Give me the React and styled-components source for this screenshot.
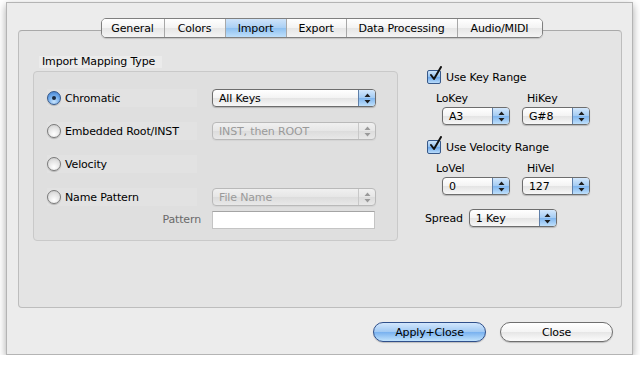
import React from 'react';
import styled, { createGlobalStyle, css } from 'styled-components';

const Global = createGlobalStyle`
  html, body {
    margin: 0;
    padding: 0;
    background: #fff;
  }
  body {
    font-family: "DejaVu Sans", "Liberation Sans", sans-serif;
    font-size: 11px;
    letter-spacing: -0.15px;
    color: #000;
  }
`;

const Window = styled.div`
  margin: 2px 0 0 6px;
  width: 627px;
  height: 353px;
  box-sizing: border-box;
  background: #ececec;
  border: 1px solid #b4b4b4;
  box-shadow: 0 3px 8px rgba(0, 0, 0, 0.35);
  padding-top: 15px;
  display: flex;
  flex-direction: column;
`;

const Tabs = styled.div`
  align-self: center;
  display: flex;
  height: 20px;
  box-sizing: border-box;
  border: 1px solid #7f7f7f;
  border-radius: 5px;
  overflow: hidden;
  position: relative;
  z-index: 1;
  margin-left: 4px;
  box-shadow: 0 1px 1px rgba(0, 0, 0, 0.15);
`;

const Tab = styled.div`
  width: ${p => p.w}px;
  display: flex;
  align-items: center;
  justify-content: center;
  background: linear-gradient(#ffffff, #f3f3f3 50%, #e6e6e6 51%, #f4f4f4);
  & + & {
    border-left: 1px solid #a8a8a8;
  }
  ${p => p.active && css`
    background: linear-gradient(#cfe4fa, #a9cff4 50%, #8ec0f0 51%, #bfe0fb);
  `}
`;

const Panel = styled.div`
  margin: -8px 10px 0 11px;
  height: 278px;
  box-sizing: border-box;
  background: #e4e4e4;
  border: 1px solid #bdbdbd;
  border-top-color: #a9a9a9;
  border-radius: 4px;
  padding: 25px 0 0 14px;
  display: flex;
`;

const Group = styled.div`
  width: 365px;
  display: flex;
  flex-direction: column;
`;

const Legend = styled.div`
  margin-left: 6px;
  width: 123px;
  height: 12px;
  line-height: 12px;
  padding-left: 3px;
  box-sizing: border-box;
  background: #ebebeb;
`;

const GroupBox = styled.div`
  margin-top: 3px;
  height: 170px;
  box-sizing: border-box;
  background: #dfdfdf;
  border: 1px solid #c9c9c9;
  border-radius: 4px;
  padding: 17px 0 0 13px;
  display: grid;
  grid-template-columns: 165px 164px;
  grid-auto-rows: 18px;
  row-gap: 15px;
  align-content: start;
`;

const Cell = styled.div`
  display: flex;
  align-items: center;
  ${p => p.tight && css`
    align-self: start;
    margin-top: -10px;
  `}
`;

const RadioLabel = styled.label`
  display: flex;
  align-items: center;
  gap: 4px;
  height: 18px;
  width: ${p => p.w}px;
  background: #e2e2e2;
`;

const RadioDot = styled.span`
  width: 14px;
  height: 14px;
  box-sizing: border-box;
  border-radius: 50%;
  border: 1px solid #7a7a7a;
  background: radial-gradient(circle at 50% 75%, #ffffff, #e2e2e2 60%, #c6c6c6);
  box-shadow: 0 1px 1px rgba(0, 0, 0, 0.2);
  display: flex;
  align-items: center;
  justify-content: center;
  ${p => p.on && css`
    border-color: #35588a;
    background: radial-gradient(circle at 50% 80%, #c8e4fd, #6fa9ea 55%, #3a77c8);
    &::after {
      content: '';
      width: 4px;
      height: 4px;
      border-radius: 50%;
      background: #1a2a40;
    }
  `}
`;

const PatternLabel = styled.div`
  justify-self: end;
  align-self: start;
  margin-top: -10px;
  line-height: 18px;
  padding-right: 11px;
  color: #6a6a6a;
`;

const TextField = styled.div`
  height: 18px;
  width: 163px;
  box-sizing: border-box;
  background: #fff;
  border: 1px solid #c4c4c4;
  border-top-color: #a4a4a4;
`;

const PopupBox = styled.div`
  width: ${p => p.w}px;
  height: 18px;
  box-sizing: border-box;
  border: 1px solid ${p => (p.disabled ? '#b9b9b9' : '#6d6d6d')};
  border-radius: 4px;
  display: flex;
  overflow: hidden;
  background: ${p => (p.disabled
    ? 'linear-gradient(#f0f0f0, #e6e6e6 50%, #dcdcdc 51%, #e8e8e8)'
    : 'linear-gradient(#ffffff, #f3f3f3 50%, #e4e4e4 51%, #f7f7f7)')};
  color: ${p => (p.disabled ? '#9a9a9a' : '#000')};
  box-shadow: 0 1px 1px rgba(0, 0, 0, ${p => (p.disabled ? 0.05 : 0.2)});
`;

const PopupText = styled.div`
  flex: 1;
  padding-left: 6px;
  display: flex;
  align-items: center;
  white-space: nowrap;
`;

const PopupArrows = styled.div`
  width: 16px;
  display: flex;
  align-items: center;
  justify-content: center;
  border-left: 1px solid ${p => (p.disabled ? '#c8c8c8' : '#5f7fa8')};
  background: ${p => (p.disabled
    ? 'transparent'
    : 'linear-gradient(#d3e7fc, #a3cbf3 50%, #7fb5ee 51%, #bfe0fb)')};
`;

const Popup = ({ w, disabled, children }) => (
  <PopupBox w={w} disabled={disabled}>
    <PopupText>{children}</PopupText>
    <PopupArrows disabled={disabled}>
      <svg width="7" height="11" viewBox="0 0 7 11">
        <path d="M3.5 0.5 L6.5 4 L0.5 4 Z M3.5 10.5 L6.5 7 L0.5 7 Z" fill={disabled ? '#9a9a9a' : '#1e1e1e'} />
      </svg>
    </PopupArrows>
  </PopupBox>
);

const Side = styled.div`
  margin-left: 27px;
  padding-top: 14px;
  display: flex;
  flex-direction: column;
`;

const CheckRow = styled.label`
  display: flex;
  align-items: center;
  gap: 5px;
  height: 14px;
  margin: ${p => p.top || 0}px 0 0 2px;
`;

const CheckBox = styled.span`
  position: relative;
  width: 14px;
  height: 14px;
  box-sizing: border-box;
  border: 1px solid #38598a;
  border-radius: 2px;
  background: linear-gradient(#d0e6fc, #8fbff0 50%, #6aa6ea 51%, #b9dcfb);
  svg {
    position: absolute;
    left: 1px;
    top: -5px;
  }
`;

const RangeGrid = styled.div`
  margin: ${p => p.top}px 0 0 17px;
  display: grid;
  grid-template-columns: 68px 68px;
  column-gap: 12px;
  grid-template-rows: 15px 18px;
`;

const SubLabel = styled.div`
  margin-left: ${p => p.shift}px;
  line-height: 14px;
  white-space: nowrap;
`;

const SpreadRow = styled.div`
  margin-top: 14px;
  display: flex;
  align-items: center;
  gap: 6px;
`;

const ButtonRow = styled.div`
  margin: 14px 19px 0 0;
  display: flex;
  justify-content: flex-end;
  gap: 14px;
`;

const Button = styled.div`
  width: 113px;
  height: 20px;
  box-sizing: border-box;
  border-radius: 10px;
  border: 1px solid #6f6f6f;
  display: flex;
  align-items: center;
  justify-content: center;
  background: linear-gradient(#ffffff, #f4f4f4 50%, #e6e6e6 51%, #fbfbfb);
  box-shadow: 0 1px 1px rgba(0, 0, 0, 0.2);
  ${p => p.primary && css`
    border-color: #2f4f8a;
    background: linear-gradient(#d2e7fd, #9fc8f3 50%, #78b1ef 51%, #c0e2fc);
  `}
`;

const Check = ({ children, top }) => (
  <CheckRow top={top}>
    <CheckBox>
      <svg width="14" height="16" viewBox="0 0 14 16">
        <path d="M2 9 L5 13 L12 1" fill="none" stroke="#111" strokeWidth="2" strokeLinecap="round" strokeLinejoin="round" />
      </svg>
    </CheckBox>
    {children}
  </CheckRow>
);

const tabs = [
  ['General', 62],
  ['Colors', 60],
  ['Import', 60],
  ['Export', 59],
  ['Data Processing', 110],
  ['Audio/MIDI', 84],
];

export default function App() {
  return (
    <>
      <Global />
      <Window>
        <Tabs>
          {tabs.map(([t, w]) => (
            <Tab key={t} w={w} active={t === 'Import'}>{t}</Tab>
          ))}
        </Tabs>
        <Panel>
          <Group>
            <Legend>Import Mapping Type</Legend>
            <GroupBox>
              <Cell>
                <RadioLabel w={150}><RadioDot on />Chromatic</RadioLabel>
              </Cell>
              <Cell><Popup w={164}>All Keys</Popup></Cell>
              <Cell>
                <RadioLabel w={150}><RadioDot />Embedded Root/INST</RadioLabel>
              </Cell>
              <Cell><Popup w={164} disabled>INST, then ROOT</Popup></Cell>
              <Cell>
                <RadioLabel w={150}><RadioDot />Velocity</RadioLabel>
              </Cell>
              <Cell />
              <Cell>
                <RadioLabel w={150}><RadioDot />Name Pattern</RadioLabel>
              </Cell>
              <Cell><Popup w={164} disabled>File Name</Popup></Cell>
              <PatternLabel>Pattern</PatternLabel>
              <Cell tight><TextField /></Cell>
            </GroupBox>
          </Group>
          <Side>
            <Check>Use Key Range</Check>
            <RangeGrid top={8}>
              <SubLabel shift={-6}>LoKey</SubLabel>
              <SubLabel shift={5}>HiKey</SubLabel>
              <Popup w={68}>A3</Popup>
              <Popup w={68}>G#8</Popup>
            </RangeGrid>
            <Check top={15}>Use Velocity Range</Check>
            <RangeGrid top={8}>
              <SubLabel shift={-6}>LoVel</SubLabel>
              <SubLabel shift={5}>HiVel</SubLabel>
              <Popup w={68}>0</Popup>
              <Popup w={68}>127</Popup>
            </RangeGrid>
            <SpreadRow>
              Spread
              <Popup w={88}>1 Key</Popup>
            </SpreadRow>
          </Side>
        </Panel>
        <ButtonRow>
          <Button primary>Apply+Close</Button>
          <Button>Close</Button>
        </ButtonRow>
      </Window>
    </>
  );
}
